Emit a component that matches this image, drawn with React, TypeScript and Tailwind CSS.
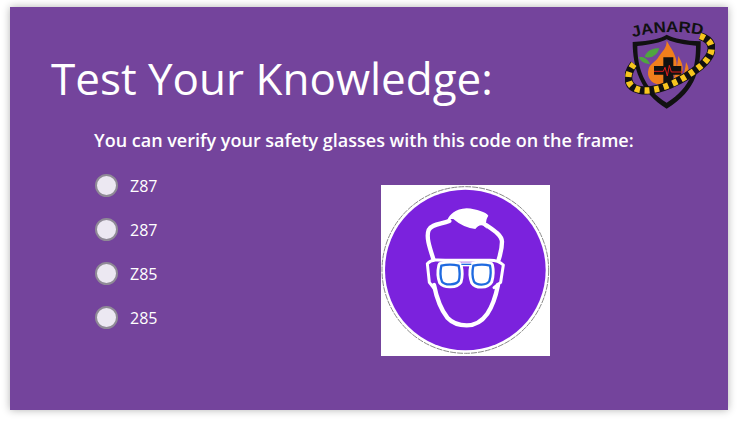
const font = "font-['Open_Sans',sans-serif]";

const options = ["Z87", "287", "Z85", "285"];

const bandPath = "M270 108 C314 122 318 158 272 198 C222 240 140 280 90 270 C48 262 46 225 72 192";

const JanardLogo = () => (
  <svg viewBox="45 39 270 312" className="absolute left-[625px] top-[13px] w-[90px] h-[104px]">
    {/* shield */}
    <path d="M68 126 C125 122 150 116 170 104 C195 116 225 122 272 124 C272 200 262 272 170 326 C90 278 68 200 68 126 Z" fill="#111" />
    <path d="M82 138 C125 134 150 128 170 118 C195 130 225 134 258 137 C258 200 245 262 170 308 C100 265 82 200 82 138 Z" fill="#74449c" />
    {/* leaf */}
    <path d="M104 170 C112 150 128 145 148 145 C142 165 125 176 108 172 Z" fill="#4fa53f" />
    <path d="M86 172 C98 168 112 174 120 192 C104 192 94 186 86 172 Z" fill="#4fa53f" />
    {/* flames */}
    <path d="M170 122 C182 145 202 165 200 200 C198 230 172 252 148 254 C124 250 108 232 116 206 C122 188 136 188 146 170 C158 152 170 145 170 122 Z" fill="#f07f1c" />
    <path d="M205 168 C214 185 222 198 216 218 C212 234 200 244 184 250 C198 226 202 195 205 168 Z" fill="#f07f1c" />
    <path d="M228 186 C236 200 238 210 232 222 L216 236 C224 218 226 205 228 186 Z" fill="#f07f1c" />
    {/* cross and pulse */}
    <path d="M160 172 H190 V198 H214 V224 H190 V250 H160 V224 H132 V198 H160 Z" fill="#111" />
    <path d="M132 214 H160 L165 202 L172 228 L178 196 L184 216 H218" fill="none" stroke="#e01b1b" strokeWidth="3" />
    {/* band */}
    <path d={bandPath} fill="none" stroke="#111" strokeWidth="24" />
    <path d={bandPath} fill="none" stroke="#f7c51e" strokeWidth="19" strokeDasharray="15 14" />
    <path id="janardArc" d="M68 112 Q170 84 282 106" fill="none" />
    <text fontFamily="'Liberation Sans', sans-serif" fontWeight="700" fontSize="46" fill="#111">
      <textPath href="#janardArc" textLength="212" lengthAdjust="spacingAndGlyphs">JANARD</textPath>
    </text>
  </svg>
);

const GlassesSign = () => (
  <svg viewBox="33 30 507 513" className="w-[169px] h-[171px] block">
    <rect x="33" y="30" width="507" height="513" fill="#fff" />
    <circle cx="286" cy="285" r="250" fill="#fff" stroke="#888" strokeWidth="3" strokeDasharray="18 3" />
    <circle cx="286" cy="285" r="241" fill="#7b22dd" />
    <g fill="none" stroke="#fff" strokeWidth="13" strokeLinejoin="round" strokeLinecap="round">
      <path d="M190 252 C178 215 168 185 176 165 C184 148 210 148 238 138" />
      <path d="M348 150 C370 165 395 180 396 200 C396 220 392 235 386 254" />
      <path d="M192 330 C200 370 210 400 232 428 C250 447 272 451 290 451 C312 451 335 440 352 416 C370 390 378 360 384 330" />
      <path d="M192 340 L178 322 L172 266 C185 252 205 254 225 256 H350 C370 254 388 258 400 270 L392 322 L372 338" strokeWidth="9" />
    </g>
    {/* hair */}
    <path d="M232 135 C240 118 255 102 290 100 C320 102 348 112 355 122 C346 135 348 150 350 162 C340 146 326 148 316 162 C295 160 270 150 250 132 C242 132 236 134 232 135 Z" fill="#fff" />
    {/* lenses */}
    <g fill="#fff" stroke="#fff" strokeWidth="24" strokeLinejoin="round">
      <path d="M214 272 C230 268 250 268 266 272 C270 290 270 305 266 318 C258 330 226 332 216 320 C210 305 210 290 214 272 Z" />
      <path d="M310 272 C326 268 346 268 360 272 C364 290 362 305 358 318 C350 332 320 332 312 320 C306 305 306 290 310 272 Z" />
    </g>
    <g fill="#fff" stroke="#1f6ae0" strokeWidth="7" strokeLinejoin="round">
      <path d="M214 272 C230 268 250 268 266 272 C270 290 270 305 266 318 C258 330 226 332 216 320 C210 305 210 290 214 272 Z" />
      <path d="M310 272 C326 268 346 268 360 272 C364 290 362 305 358 318 C350 332 320 332 312 320 C306 305 306 290 310 272 Z" />
    </g>
    <path d="M274 268 H304" stroke="#fff" strokeWidth="12" />
    <path d="M274 268 H304" stroke="#1f6ae0" strokeWidth="4" />
  </svg>
);

export default function App() {
  return (
    <div className={`relative w-[737px] h-[423px] overflow-hidden bg-white pt-[7px] pl-[10px] ${font}`}>
      <div className="w-[718px] h-[403px] bg-[#74449c] shadow-[0_0_8px_rgba(0,0,0,0.3)] text-white">
        <h1 className="pt-[44px] pl-[41px] text-[44px] leading-[54px] font-normal">Test Your Knowledge:</h1>
        <p className="mt-[23px] pl-[84px] text-[18px] leading-[24px] font-semibold">
          You can verify your safety glasses with this code on the frame:
        </p>
        <div className="flex mt-[21px]">
          <ul className="w-[371px] pl-[85px] pt-[1px] flex flex-col gap-[22px] shrink-0">
            {options.map((option) => (
              <li key={option} className="flex items-center gap-[12px] h-[22px]">
                <span className="w-[23px] h-[23px] rounded-full bg-[#ece8f2] border-2 border-[#8f8a96]" />
                <span className="text-[16px] leading-[22px] pt-[2px]">{option}</span>
              </li>
            ))}
          </ul>
          <div className="mt-[12px]">
            <GlassesSign />
          </div>
        </div>
      </div>
      <JanardLogo />
    </div>
  );
}
